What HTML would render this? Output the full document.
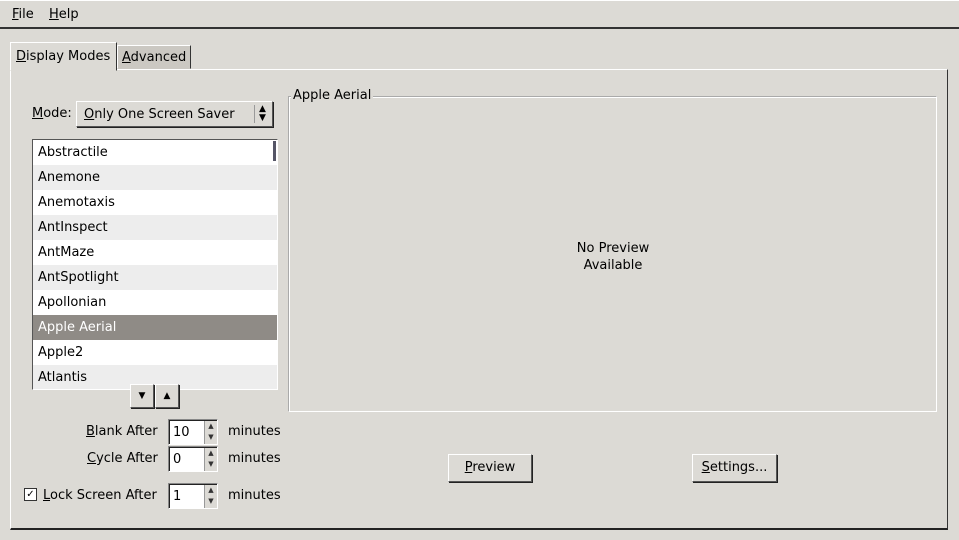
<!DOCTYPE html><html><head><style>
*{margin:0;padding:0;box-sizing:border-box}
body{width:959px;height:540px;background:#dcdad5;font-family:"DejaVu Sans","Liberation Sans",sans-serif;font-size:13px;color:#000;position:relative;overflow:hidden;white-space:nowrap}
.a{position:absolute}
u{text-decoration:underline}
.btn{position:absolute;background:#dcdad5;border:1px solid;border-color:#fff #555 #555 #fff;box-shadow:1px 1px 0 #222;text-align:center}
.row{height:25px;line-height:25px;padding-left:5px}
.spin{position:absolute;width:50px;height:26px;background:#fff;border:1px solid;border-color:#888 #fff #fff #888;box-shadow:inset 1px 1px 0 #222;line-height:25px;padding-left:4px}
.spin i{position:absolute;right:0;top:1px;width:13px;height:23px;background:#dcdad5;border-left:1px solid #999;font-style:normal;font-size:7px;line-height:11px;text-align:center;color:#333}
</style></head><body>
<div class="a" style="left:0;top:0;width:959px;height:29px;border-top:1px solid #fff;border-bottom:2px solid #333;"></div>
<div class="a" style="left:12px;top:7px"><u>F</u>ile</div>
<div class="a" style="left:49px;top:7px"><u>H</u>elp</div>
<div class="a" style="left:10px;top:69px;width:938px;height:461px;border:1px solid;border-color:#fff #333 #222 #fff;border-bottom-width:2px"></div>
<div class="a" style="left:10px;top:42px;width:107px;height:29px;background:#dcdad5;border:1px solid;border-color:#fff #333 transparent #fff;padding:6px 0 0 5px"><u>D</u>isplay Modes</div>
<div class="a" style="left:117px;top:45px;width:74px;height:24px;background:#cbc8c2;border:1px solid;border-color:#fff #333 transparent #fff;padding:4px 0 0 4px"><u>A</u>dvanced</div>
<div class="a" style="left:32px;top:106px"><u>M</u>ode:</div>
<div class="btn" style="left:76px;top:101px;width:197px;height:26px;text-align:left;padding:5px 0 0 7px"><u>O</u>nly One Screen Saver<span class="a" style="left:177px;top:3px;height:18px;border-left:1px solid #999;padding-left:4px;font-size:9px;line-height:9px">▲<br>▼</span></div>
<div class="a" style="left:32px;top:139px;width:246px;height:251px;background:#fff;border:1px solid;border-color:#555 #fff #fff #555;overflow:hidden">
<div class="a" style="right:1px;top:1px;width:3px;height:20px;background:#556"></div>
<div class="row">Abstractile</div><div class="row" style="background:#ededed">Anemone</div><div class="row">Anemotaxis</div><div class="row" style="background:#ededed">AntInspect</div><div class="row">AntMaze</div><div class="row" style="background:#ededed">AntSpotlight</div><div class="row">Apollonian</div><div class="row" style="background:#8f8b86;color:#fff">Apple Aerial</div><div class="row">Apple2</div><div class="row" style="background:#ededed">Atlantis</div></div>
<div class="btn" style="left:130px;top:384px;width:24px;height:24px;font-size:9px;line-height:22px">▼</div>
<div class="btn" style="left:155px;top:384px;width:24px;height:24px;font-size:9px;line-height:22px">▲</div>
<div class="a" style="left:86px;top:424px"><u>B</u>lank After</div>
<div class="spin" style="left:168px;top:419px">10<i>▲<br>▼</i></div>
<div class="a" style="left:228px;top:424px">minutes</div>
<div class="a" style="left:87px;top:451px"><u>C</u>ycle After</div>
<div class="spin" style="left:168px;top:446px">0<i>▲<br>▼</i></div>
<div class="a" style="left:228px;top:451px">minutes</div>
<div class="a" style="left:24px;top:488px;width:13px;height:13px;background:#fff;border:1px solid #333;font-size:10px;line-height:11px;text-align:center">✓</div>
<div class="a" style="left:43px;top:488px"><u>L</u>ock Screen After</div>
<div class="spin" style="left:168px;top:483px">1<i>▲<br>▼</i></div>
<div class="a" style="left:228px;top:488px">minutes</div>
<div class="a" style="left:288px;top:96px;width:649px;height:316px;border:1px solid;border-color:#aaa #fff #fff #aaa;box-shadow:1px 1px 0 #fff inset"></div>
<div class="a" style="left:291px;top:88px;background:#dcdad5;padding:0 2px">Apple Aerial</div>
<div class="a" style="left:540px;top:240px;width:146px;text-align:center;line-height:17px">No Preview<br>Available</div>
<div class="btn" style="left:448px;top:454px;width:84px;height:28px;line-height:26px"><u>P</u>review</div>
<div class="btn" style="left:692px;top:454px;width:85px;height:28px;line-height:26px"><u>S</u>ettings...</div>
</body></html>
